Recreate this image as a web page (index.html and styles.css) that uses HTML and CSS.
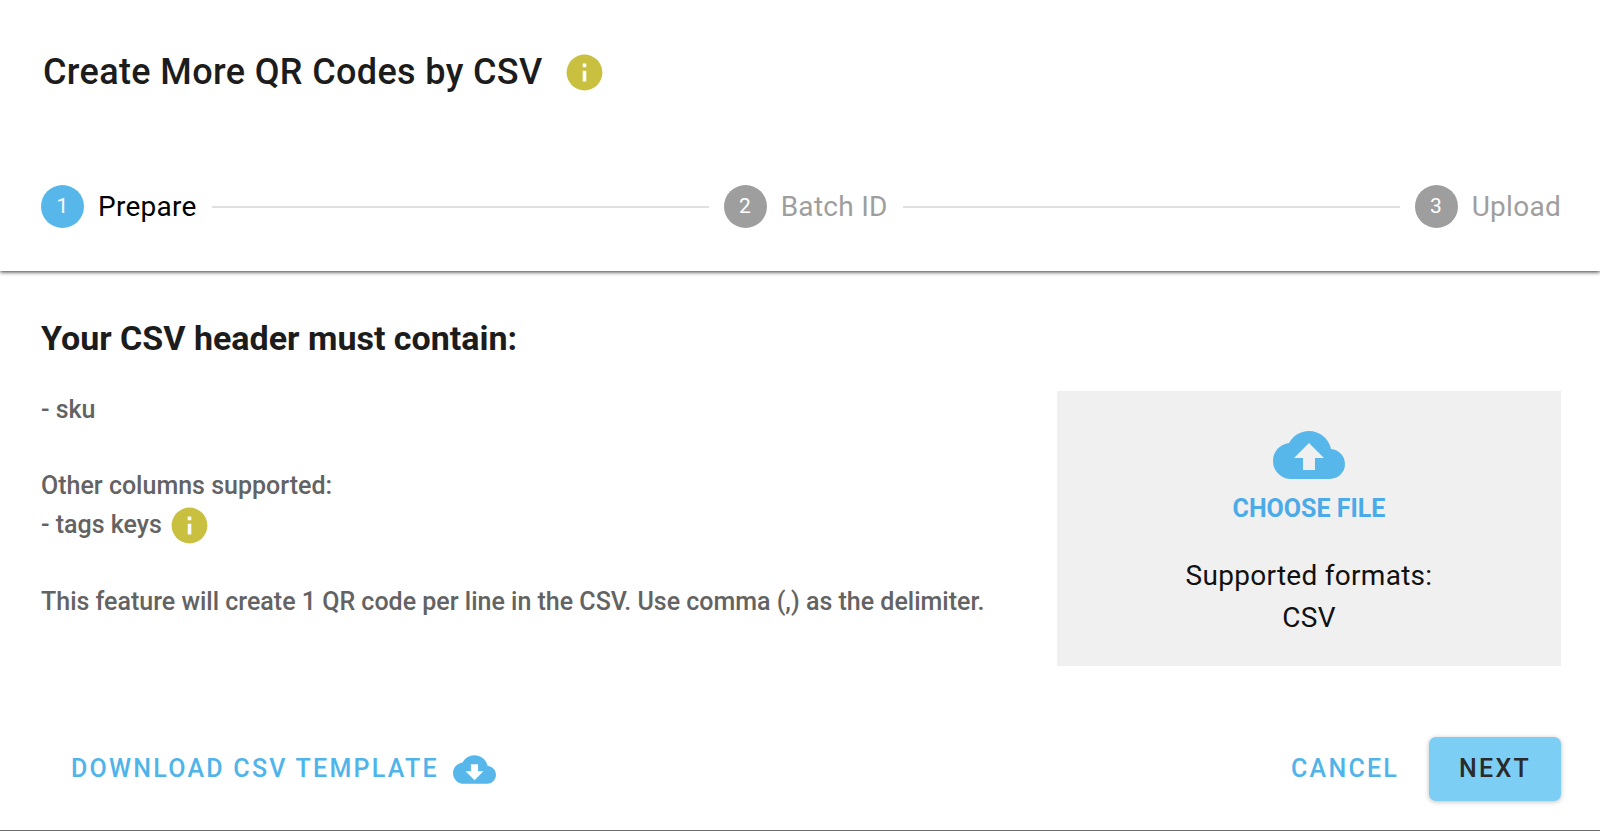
FILE: index.html
```
<!DOCTYPE html>
<html lang="en">
<head>
    <meta charset="UTF-8">
    <meta name="viewport" content="width=device-width, initial-scale=1.0">
    <title>Create More QR Codes by CSV</title>
    <link rel="stylesheet" href="styles.css">
</head>
<body>
    <main class="dialog">
        <header class="title-bar">
            <h1>Create More QR Codes by CSV</h1>
            <svg class="icon-info" viewBox="0 0 24 24" role="img" aria-label="Info"><path d="M13,9H11V7H13M13,17H11V11H13M12,2A10,10 0 0,0 2,12A10,10 0 0,0 12,22A10,10 0 0,0 22,12A10,10 0 0,0 12,2Z"/></svg>
        </header>

        <div class="stepper">
            <div class="step active"><span class="step-number">1</span>Prepare</div>
            <hr class="step-line">
            <div class="step"><span class="step-number">2</span>Batch ID</div>
            <hr class="step-line">
            <div class="step"><span class="step-number">3</span>Upload</div>
        </div>

        <section class="content">
            <h2>Your CSV header must contain:</h2>
            <div class="columns">
                <div class="description">
                    <p>- sku</p>
                    <p>Other columns supported:<br>
                        <span class="tags">- tags keys
                            <svg class="icon-info" viewBox="0 0 24 24" role="img" aria-label="Info"><path d="M13,9H11V7H13M13,17H11V11H13M12,2A10,10 0 0,0 2,12A10,10 0 0,0 12,22A10,10 0 0,0 22,12A10,10 0 0,0 12,2Z"/></svg>
                        </span>
                    </p>
                    <p>This feature will create 1 QR code per line in the CSV. Use comma (,) as the delimiter.</p>
                </div>
                <div class="upload-box">
                    <button type="button" class="choose-file">
                        <svg class="icon-upload" viewBox="0 0 24 24" aria-hidden="true"><path d="M14,13V17H10V13H7L12,8L17,13M19.35,10.03C18.67,6.59 15.64,4 12,4C9.11,4 6.6,5.64 5.35,8.03C2.34,8.36 0,10.9 0,14A6,6 0 0,0 6,20H19A5,5 0 0,0 24,15C24,12.36 21.95,10.22 19.35,10.03Z"/></svg>
                        CHOOSE FILE
                    </button>
                    <div class="formats">Supported formats:<br>CSV</div>
                </div>
            </div>
        </section>

        <footer class="actions">
            <a href="#" class="btn">
                DOWNLOAD CSV TEMPLATE
                <svg class="icon-download" viewBox="0 0 24 24" aria-hidden="true"><path d="M17,13L12,18L7,13H10V9H14V13M19.35,10.03C18.67,6.59 15.64,4 12,4C9.11,4 6.6,5.64 5.35,8.03C2.34,8.36 0,10.9 0,14A6,6 0 0,0 6,20H19A5,5 0 0,0 24,15C24,12.36 21.95,10.22 19.35,10.03Z"/></svg>
            </a>
            <div class="spacer"></div>
            <button type="button" class="btn">CANCEL</button>
            <button type="button" class="btn btn-primary">NEXT</button>
        </footer>
    </main>
</body>
</html>
```

FILE: styles.css
```
* {
    box-sizing: border-box;
}
body {
    margin: 0;
    font-family: Roboto, sans-serif;
    background: #fff;
    color: #1c1c1c;
}
h1, h2, p {
    margin: 0;
}
svg {
    display: block;
    flex: none;
    fill: #57b7eb;
}
.dialog {
    min-height: 100vh;
    display: flex;
    flex-direction: column;
    border-bottom: 1px solid #6b6b6b;
}
.title-bar {
    display: flex;
    align-items: center;
    gap: 20px;
    padding: 43px 43px 41px;
    /* covers the top edge of the stepper shadow */
    position: relative;
    z-index: 1;
    background: #fff;
}
h1 {
    font-size: 36px;
    font-weight: 500;
    line-height: 58px;
    letter-spacing: 0.01em;
}
.icon-info {
    width: 43px;
    height: 43px;
    fill: #c9c03f;
}
.stepper {
    display: flex;
    align-items: center;
    gap: 15px;
    padding: 43px 39px 43px 41px;
    box-shadow: 0 1px 4px rgba(0, 0, 0, 0.8);
}
.step {
    display: flex;
    align-items: center;
    gap: 14px;
    font-size: 28px;
    line-height: 43px;
    letter-spacing: 0.01em;
    color: #9e9e9e;
}
.step.active {
    color: #000;
}
.step-number {
    width: 43px;
    height: 43px;
    border-radius: 50%;
    background: #9e9e9e;
    color: #fff;
    font-size: 21px;
    text-align: center;
}
.step.active .step-number {
    background: #57b7eb;
}
.step-line {
    flex: 1;
    margin: 0;
    border: 0;
    border-top: 2px solid #e0e0e0;
}
.content {
    padding: 42px 39px 0 41px;
}
h2 {
    font-size: 34px;
    font-weight: 700;
    line-height: 50px;
}
.columns {
    display: flex;
    justify-content: space-between;
    align-items: flex-start;
    gap: 40px;
    padding-top: 28px;
}
.description {
    display: flex;
    flex-direction: column;
    gap: 38px;
    font-size: 25px;
    font-weight: 500;
    line-height: 38px;
    color: #636363;
}
.tags {
    display: flex;
    align-items: center;
    gap: 6px;
    height: 40px;
}
.upload-box {
    flex: 0 1 504px;
    display: flex;
    flex-direction: column;
    align-items: center;
    gap: 28px;
    padding: 28px 28px 27px;
    background: #f0f0f0;
}
.choose-file {
    display: flex;
    flex-direction: column;
    align-items: center;
    padding: 0;
    border: 0;
    background: none;
    color: #4baae8;
    font: 700 25px/36px Roboto, sans-serif;
    cursor: pointer;
}
.icon-upload {
    width: 72px;
    height: 72px;
}
.formats {
    font-size: 28px;
    line-height: 42px;
    letter-spacing: 0.01em;
    text-align: center;
    color: #111;
}
.actions {
    display: flex;
    align-items: center;
    margin-top: auto;
    padding: 0 39px 29px 41px;
}
.btn {
    display: flex;
    align-items: center;
    gap: 14px;
    height: 64px;
    padding: 0 30px;
    border: 0;
    border-radius: 7px;
    background: none;
    color: #4fb4ea;
    font: 500 25px/36px Roboto, sans-serif;
    letter-spacing: 0.09em;
    text-decoration: none;
    cursor: pointer;
}
.icon-download {
    width: 43px;
    height: 43px;
}
.btn-primary {
    background: #7ccef5;
    color: #2a2a2a;
    box-shadow: 0 1px 5px rgba(0, 0, 0, 0.25);
}
.spacer {
    flex: 1;
}
```
